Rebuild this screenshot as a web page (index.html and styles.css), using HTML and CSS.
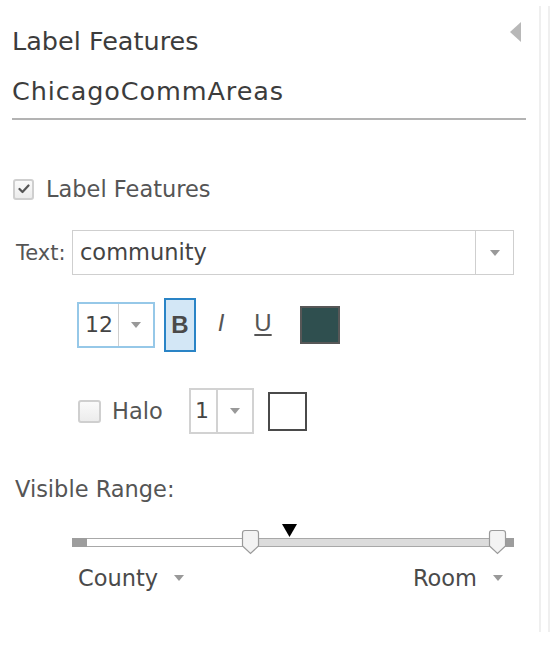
FILE: index.html
```html
<!DOCTYPE html>
<html>
<head>
<meta charset="utf-8">
<link rel="stylesheet" href="styles.css">
</head>
<body>
<div class="page">
  <div class="panel">
    <div class="header">
      <div class="titles">
        <div class="title">Label Features</div>
        <div class="title layer">ChicagoCommAreas</div>
      </div>
      <svg class="collapse" width="11" height="20" viewBox="0 0 11 20"><polygon points="11,0 11,20 0,10" fill="#b8b8b8"/></svg>
    </div>
    <div class="divider"></div>

    <div class="check-row">
      <span class="checkbox"><svg width="12" height="10" viewBox="0 0 12 10"><path d="M1.5 5 L4.5 8 L10.5 1.5" fill="none" stroke="#555" stroke-width="2.2" stroke-linecap="round" stroke-linejoin="round"/></svg></span>
      <span class="check-label">Label Features</span>
    </div>

    <div class="text-row">
      <span class="text-label">Text:</span>
      <div class="select">
        <span class="select-value">community</span>
        <span class="select-btn"><i class="caret"></i></span>
      </div>
    </div>

    <div class="font-row">
      <div class="size-box">
        <span class="size-value">12</span>
        <span class="size-btn"><i class="caret"></i></span>
      </div>
      <div class="style-btn bold active">B</div>
      <div class="style-btn italic">I</div>
      <div class="style-btn underline">U</div>
      <div class="swatch dark"></div>
    </div>

    <div class="halo-row">
      <span class="checkbox empty"></span>
      <span class="halo-label">Halo</span>
      <div class="halo-box">
        <span class="halo-value">1</span>
        <span class="halo-btn"><i class="caret"></i></span>
      </div>
      <div class="swatch light"></div>
    </div>

    <div class="range-label">Visible Range:</div>

    <div class="slider">
      <div class="track">
        <span class="seg-end left"></span>
        <span class="seg-out"></span>
        <span class="seg-in"></span>
        <span class="seg-end right"></span>
      </div>
      <svg class="thumb t1" width="19" height="26" viewBox="0 0 19 26"><path d="M1.5 4 Q1.5 1.5 4 1.5 H15 Q17.5 1.5 17.5 4 V17 L9.5 24.5 L1.5 17 Z" fill="#f3f3f3" stroke="#9a9a9a" stroke-width="1.2"/></svg>
      <svg class="thumb t2" width="19" height="26" viewBox="0 0 19 26"><path d="M1.5 4 Q1.5 1.5 4 1.5 H15 Q17.5 1.5 17.5 4 V17 L9.5 24.5 L1.5 17 Z" fill="#f3f3f3" stroke="#9a9a9a" stroke-width="1.2"/></svg>
      <svg class="marker" width="15" height="13" viewBox="0 0 15 13"><polygon points="0,0 15,0 7.5,13" fill="#000"/></svg>
    </div>

    <div class="scale-row">
      <span class="scale">County <i class="caret"></i></span>
      <span class="scale">Room <i class="caret"></i></span>
    </div>
  </div>
  <div class="rails"></div>
</div>
</body>
</html>
```

FILE: styles.css
```css
html, body {
  margin: 0;
  padding: 0;
  background: #fff;
}
body {
  font-family: "DejaVu Sans", "Open Sans", sans-serif;
  color: #444;
}
.page {
  display: flex;
  align-items: flex-start;
  width: 556px;
  height: 646px;
  overflow: hidden;
}
.panel {
  width: 527px;
  padding-left: 12px;
  box-sizing: content-box;
}
.rails {
  margin-top: 6px;
  height: 626px;
  width: 7px;
  border-left: 2px solid #efefef;
  border-right: 2px solid #efefef;
}

.header {
  display: flex;
  justify-content: space-between;
  align-items: flex-start;
  padding-top: 24px;
}
.title {
  font-size: 25.5px;
  line-height: 34px;
  color: #3c3c3c;
}
.title.layer {
  margin-top: 16px;
  letter-spacing: 0.9px;
}
.collapse {
  margin-top: -2px;
  margin-right: 18px;
}
.divider {
  margin-top: 10px;
  width: 514px;
  height: 2px;
  background: #b3b3b3;
}

.check-row {
  display: flex;
  align-items: center;
  margin-top: 57px;
  height: 24px;
}
.checkbox {
  width: 21px;
  height: 21px;
  box-sizing: border-box;
  border: 2px solid #cfcfcf;
  border-radius: 3px;
  background: linear-gradient(#fafafa, #ececec);
  display: flex;
  align-items: center;
  justify-content: center;
  margin-left: 1px;
}
.check-label {
  margin-left: 12px;
  font-size: 22.5px;
  color: #555;
}

.text-row {
  display: flex;
  align-items: center;
  margin-top: 29px;
}
.text-label {
  margin-left: 4px;
  width: 56px;
  font-size: 21px;
  color: #555;
}
.select {
  display: flex;
  width: 442px;
  height: 45px;
  box-sizing: border-box;
  border: 1px solid #cfcfcf;
}
.select-value {
  flex: 1;
  padding-left: 7px;
  font-size: 22.5px;
  line-height: 43px;
  color: #444;
  border-right: 1px solid #cfcfcf;
}
.select-btn {
  width: 37px;
  display: flex;
  align-items: center;
  justify-content: center;
}
.caret {
  display: inline-block;
  width: 0;
  height: 0;
  border-left: 5px solid transparent;
  border-right: 5px solid transparent;
  border-top: 6px solid #999;
}

.font-row {
  display: flex;
  align-items: center;
  margin-top: 23px;
  margin-left: 65px;
}
.size-box {
  display: flex;
  width: 78px;
  height: 46px;
  box-sizing: border-box;
  border: 2px solid #96c8e8;
}
.size-value {
  width: 40px;
  border-right: 1px solid #cfcfcf;
  padding-left: 6px;
  box-sizing: border-box;
  font-size: 22px;
  line-height: 42px;
  color: #444;
}
.size-btn {
  flex: 1;
  display: flex;
  align-items: center;
  justify-content: center;
}
.style-btn {
  height: 54px;
  width: 32px;
  box-sizing: border-box;
  display: flex;
  align-items: center;
  justify-content: center;
  font-family: "Liberation Sans", Arial, sans-serif;
  font-size: 24px;
  color: #555;
}
.style-btn.active {
  margin-left: 9px;
  background: #d3e7f6;
  border: 2px solid #2a84c6;
}
.style-btn.bold {
  font-weight: bold;
  color: #4a4a4a;
}
.style-btn.italic {
  margin-left: 9px;
  font-style: italic;
  font-weight: normal;
  padding-bottom: 4px;
}
.style-btn.underline {
  margin-left: 10px;
  text-decoration: underline;
  text-underline-offset: 3px;
  text-decoration-thickness: 1.5px;
  padding-bottom: 4px;
}
.swatch {
  box-sizing: border-box;
}
.swatch.dark {
  margin-left: 21px;
  width: 40px;
  height: 38px;
  background: #2f4f4f;
  border: 2px solid #575757;
}

.halo-row {
  display: flex;
  align-items: center;
  margin-top: 36px;
  margin-left: 66px;
}
.checkbox.empty {
  width: 23px;
  height: 23px;
  margin-left: 0;
}
.halo-label {
  margin-left: 11px;
  font-size: 22.5px;
  color: #555;
  width: 77px;
}
.halo-box {
  display: flex;
  width: 65px;
  height: 46px;
  box-sizing: border-box;
  border: 2px solid #d2d2d2;
}
.halo-value {
  width: 27px;
  border-right: 2px solid #d2d2d2;
  padding-left: 4px;
  box-sizing: border-box;
  font-size: 22px;
  line-height: 42px;
  color: #444;
}
.halo-btn {
  flex: 1;
  display: flex;
  align-items: center;
  justify-content: center;
}
.swatch.light {
  margin-left: 14px;
  width: 39px;
  height: 39px;
  background: #fff;
  border: 2px solid #4a4a4a;
}

.range-label {
  margin-top: 42px;
  margin-left: 3px;
  font-size: 22.5px;
  color: #555;
}

.slider {
  position: relative;
  margin-top: 21px;
  margin-left: 60px;
  width: 442px;
  height: 32px;
}
.track {
  position: absolute;
  left: 0;
  right: 0;
  top: 15px;
  height: 9px;
  display: flex;
}
.seg-end {
  background: #9d9d9d;
}
.seg-end.left {
  width: 15px;
}
.seg-end.right {
  width: 9px;
}
.seg-out {
  width: 155px;
  box-sizing: border-box;
  background: #fff;
  border-top: 1px solid #a8a8a8;
  border-bottom: 1px solid #a8a8a8;
}
.seg-in {
  flex: 1;
  box-sizing: border-box;
  background: #dcdcdc;
  border-top: 1px solid #a8a8a8;
  border-bottom: 1px solid #a8a8a8;
}
.thumb {
  position: absolute;
  top: 6px;
}
.thumb.t1 {
  left: 169px;
}
.thumb.t2 {
  left: 416px;
}
.marker {
  position: absolute;
  top: 1px;
  left: 210px;
}

.scale-row {
  display: flex;
  justify-content: space-between;
  margin-top: 10px;
  margin-left: 66px;
  width: 425px;
}
.scale {
  display: flex;
  align-items: center;
  font-size: 22.5px;
  color: #4a4a4a;
}
.scale .caret {
  margin-left: 16px;
  border-top-color: #999;
}
```
